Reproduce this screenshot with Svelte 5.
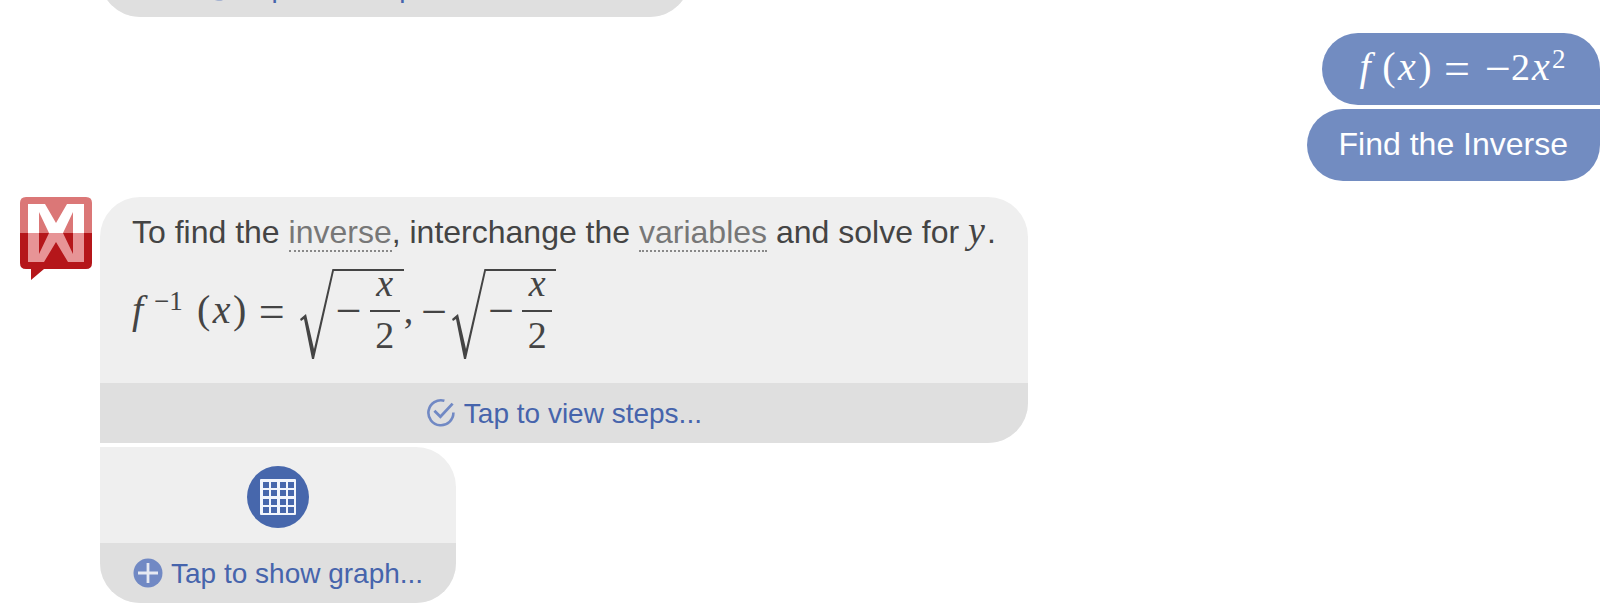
<script>
  const previousAction = 'Tap to solve problem for x...';
</script>

{#snippet checkIcon()}
  <svg class="action-icon" viewBox="0 0 30 30" aria-hidden="true">
    <path d="M18.4 2.8A12.5 12.5 0 1 0 27.4 14.5" fill="none" stroke="#7189c4" stroke-width="2.6" />
    <path d="M8.4 12.8l6 6L26.6 5.6" fill="none" stroke="#7189c4" stroke-width="2.8" />
  </svg>
{/snippet}

{#snippet root()}
  <span class="radical">
    <svg class="root-sign" viewBox="0 0 34 92" aria-hidden="true">
      <path d="M0 51L6 46L14 81L32.4 1L34 1V2.5L14 91H12L4 51L1 53Z" fill="#444" />
    </svg>
    <span class="radicand">
      <span class="run"><span class="op">−</span></span>
      <span class="fraction">
        <i class="numerator">x</i>
        <span class="denominator">2</span>
      </span>
    </span>
  </span>
{/snippet}

<main class="chat">
  <section class="reply">
    <div class="bubbles">
      <div class="bubble previous">
        <button class="action">{@render checkIcon()}<span>{previousAction}</span></button>
      </div>
    </div>
  </section>

  <section class="question">
    <div class="ask first">
      <span class="run" role="math">
        <i class="var f">f</i><span class="paren">(</span><i class="var">x</i><span class="paren">)</span>
        <span class="op rel">=</span><span class="op">−</span><span>2</span><i class="var">x</i><span class="sup">2</span>
      </span>
    </div>
    <div class="ask last">Find the Inverse</div>
  </section>

  <section class="reply">
    <svg class="avatar" viewBox="0 0 72 83" role="img" aria-label="Assistant">
      <path d="M0 36V6Q0 0 6 0H66Q72 0 72 6V36Z" fill="#db7777" />
      <path d="M0 36H72V66Q72 72 66 72H24L11 83V72H6Q0 72 0 66Z" fill="#b5161a" />
      <path d="M8 36V7H25L36 26L47 7H64V36H53V15L43 36H29L19 15V36Z" fill="#fff" />
      <path d="M8 36H19V57L29 36H43L53 57V36H64V65H48L36 45L24 65H8Z" fill="#e79496" />
    </svg>
    <div class="bubbles">
      <div class="bubble answer">
        <div class="content">
          <p>To find the <a href="#inverse">inverse</a>, interchange the <a href="#variables">variables</a> and solve for <i class="var y">y</i>.</p>
          <div class="formula" role="math">
            <span class="run">
              <i class="var f tight">f</i><span class="sup power">−1</span><span class="paren">(</span><i class="var">x</i><span class="paren">)</span>
              <span class="op rel">=</span>
            </span>
            {@render root()}
            <span class="run"><span class="comma">,</span><span class="op negative">−</span></span>
            {@render root()}
          </div>
        </div>
        <button class="action">{@render checkIcon()}<span>Tap to view steps...</span></button>
      </div>

      <div class="bubble graph">
        <div class="preview">
          <svg class="grid-icon" viewBox="0 0 62 62" aria-hidden="true">
            <circle cx="31" cy="31" r="31" fill="#4767ac" />
            <rect x="13" y="13" width="36" height="36" rx="1" fill="#f2f5fc" />
            {#each [16, 24, 33, 41] as y}
              {#each [16, 24, 33, 41] as x}
                <rect {x} {y} width="6" height="6" fill="#4767ac" />
              {/each}
            {/each}
          </svg>
        </div>
        <button class="action">
          <svg class="action-icon" viewBox="0 0 30 30" aria-hidden="true">
            <circle cx="15" cy="15" r="14.5" fill="#7189c4" />
            <path d="M15 5V25M5 15H25" stroke="#e6e9f2" stroke-width="2.8" />
          </svg>
          <span>Tap to show graph...</span>
        </button>
      </div>
    </div>
  </section>
</main>

<style>
  :global(body) {
    margin: 0;
    background: #fff;
  }

  .chat {
    box-sizing: border-box;
    height: 100vh;
    overflow: hidden;
    display: flex;
    flex-direction: column;
    justify-content: flex-end;
    gap: 16px;
    padding: 0 20px 12px;
    color: #444;
    font: 32px/40px "Liberation Sans", Arial, sans-serif;
  }

  .question,
  .reply {
    display: flex;
    flex-shrink: 0;
  }

  .question {
    flex-direction: column;
    align-items: flex-end;
    gap: 4px;
    color: #fff;
  }

  .ask {
    padding: 15px 32px 17px;
    border-radius: 36px;
    background: #728cc1;
  }

  .ask.first {
    border-bottom-right-radius: 0;
  }

  .ask.last {
    border-top-right-radius: 0;
  }

  .reply {
    align-items: flex-start;
    gap: 8px;
  }

  .avatar {
    width: 72px;
    height: 83px;
  }

  .bubbles {
    display: flex;
    flex-direction: column;
    align-items: flex-start;
    gap: 4px;
  }

  .bubble {
    overflow: hidden;
    border-radius: 40px;
    background: #efefef;
  }

  .previous {
    margin-left: 80px;
    padding-top: 40px;
  }

  .previous .action {
    padding: 0 104px;
  }

  .answer {
    border-bottom-left-radius: 0;
  }

  .graph {
    border-top-left-radius: 0;
  }

  .content {
    padding: 15px 32px 23px;
  }

  p {
    margin: 0;
  }

  a {
    color: #777;
    text-decoration: none;
    border-bottom: 2px dotted #888;
  }

  .action {
    display: flex;
    align-items: center;
    justify-content: center;
    gap: 8px;
    width: 100%;
    height: 60px;
    padding: 0 33px;
    border: 0;
    background: #dfdfdf;
    color: #4664ac;
    font: 28px/32px "Liberation Sans", Arial, sans-serif;
    white-space: nowrap;
    cursor: pointer;
  }

  .action span {
    padding-top: 2px;
  }

  .action-icon {
    width: 30px;
    height: 30px;
  }

  .preview {
    display: flex;
    justify-content: center;
    padding: 19px 0 15px;
  }

  .grid-icon {
    width: 62px;
    height: 62px;
  }

  .run,
  .var,
  .fraction {
    font-family: "Liberation Serif", "Times New Roman", serif;
  }

  .run {
    display: flex;
    align-items: baseline;
    height: 40px;
    font-size: 38px;
    line-height: 38px;
  }

  .var {
    min-width: 22px;
    font-size: 40px;
    text-align: center;
  }

  .f {
    margin-right: 6px;
  }

  .f.tight {
    margin-right: 0;
    text-align: left;
  }

  .y {
    margin-right: 2px;
    font-size: 38px;
    line-height: 32px;
  }

  .paren {
    min-width: 14px;
    font-size: 40px;
    text-align: center;
  }

  .op {
    align-self: flex-start;
    min-width: 26px;
    font-size: 46px;
    line-height: 42px;
    text-align: center;
  }

  .rel {
    margin: 0 15px 0 12px;
  }

  .sup {
    align-self: flex-start;
    min-width: 16px;
    font-size: 27px;
    line-height: 22px;
  }

  .power {
    margin-right: 14px;
    line-height: 20px;
  }

  .comma {
    margin-right: 8px;
  }

  .negative {
    margin-right: 5px;
  }

  .formula {
    display: flex;
    align-items: center;
    margin-top: 10px;
  }

  .radical {
    display: flex;
    height: 92px;
    margin-top: 6px;
  }

  .root-sign {
    width: 34px;
    height: 92px;
  }

  .radicand {
    display: flex;
    align-items: flex-start;
    gap: 8px;
    margin-top: 1px;
    padding: 0 4px 0 2px;
    border-top: 2px solid #444;
  }

  .radicand .run {
    padding-top: 19px;
  }

  .fraction {
    display: flex;
    flex-direction: column;
    width: 30px;
    font-size: 38px;
    line-height: 20px;
    text-align: center;
  }

  .numerator {
    padding: 2px 0 17px;
    border-bottom: 2px solid #444;
  }

  .denominator {
    padding-top: 13px;
  }
</style>
